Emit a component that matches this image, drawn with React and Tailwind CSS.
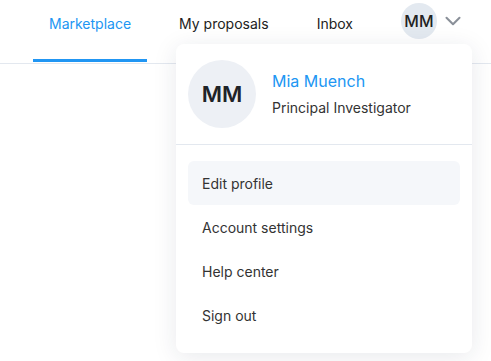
import { ChevronDown } from "lucide-react";

const tabs = [
  { label: "Marketplace", active: true },
  { label: "My proposals" },
  { label: "Inbox" },
];

const menu = ["Edit profile", "Account settings", "Help center", "Sign out"];

export default function App() {
  return (
    <div className="relative h-[361px] w-[491px] overflow-hidden bg-white font-['Inter',sans-serif]">
      <header className="flex h-[64px] items-stretch border-b border-[#e3e8ef] pl-[33px]">
        <nav className="flex gap-4">
          {tabs.map((t) => (
            <div
              key={t.label}
              className={`relative flex items-start px-4 pt-[13px] text-[14px] ${
                t.active ? "text-[#2196f3]" : "text-[#222]"
              }`}
            >
              {t.label}
              {t.active && (
                <span className="absolute bottom-[1px] left-0 right-0 h-[3px] bg-[#2196f3]" />
              )}
            </div>
          ))}
        </nav>
        <div className="ml-[32px] flex items-start pt-[3px]">
          <div className="flex h-[36px] w-[36px] items-center justify-center rounded-full bg-[#e3e9f0] text-[16px] font-medium text-[#222]">
            MM
          </div>
          <ChevronDown className="ml-[3px] mt-[5px] h-[26px] w-[26px] text-[#8a9099]" strokeWidth={1.9} />
        </div>
      </header>

      <div className="absolute left-[176px] top-[44px] w-[296px] rounded-lg bg-white shadow-[0_4px_24px_rgba(30,40,70,0.10)]">
        <div className="flex items-center gap-4 border-b border-[#e3e8ef] px-3 py-4">
          <div className="flex h-[68px] w-[68px] items-center justify-center rounded-full bg-[#edf0f5] text-[22px] font-semibold text-[#1f2328]">
            MM
          </div>
          <div className="flex flex-col gap-[7px]">
            <div className="text-[16px] leading-5 text-[#2196f3]">Mia Muench</div>
            <div className="text-[14px] leading-5 text-[#333]">Principal Investigator</div>
          </div>
        </div>
        <div className="px-3 py-4">
          {menu.map((m, i) => (
            <div
              key={m}
              className={`flex h-[44px] items-center rounded-md pl-[14px] text-[14px] text-[#333] ${
                i === 0 ? "bg-[#f5f7fa]" : ""
              }`}
            >
              {m}
            </div>
          ))}
        </div>
      </div>
    </div>
  );
}
